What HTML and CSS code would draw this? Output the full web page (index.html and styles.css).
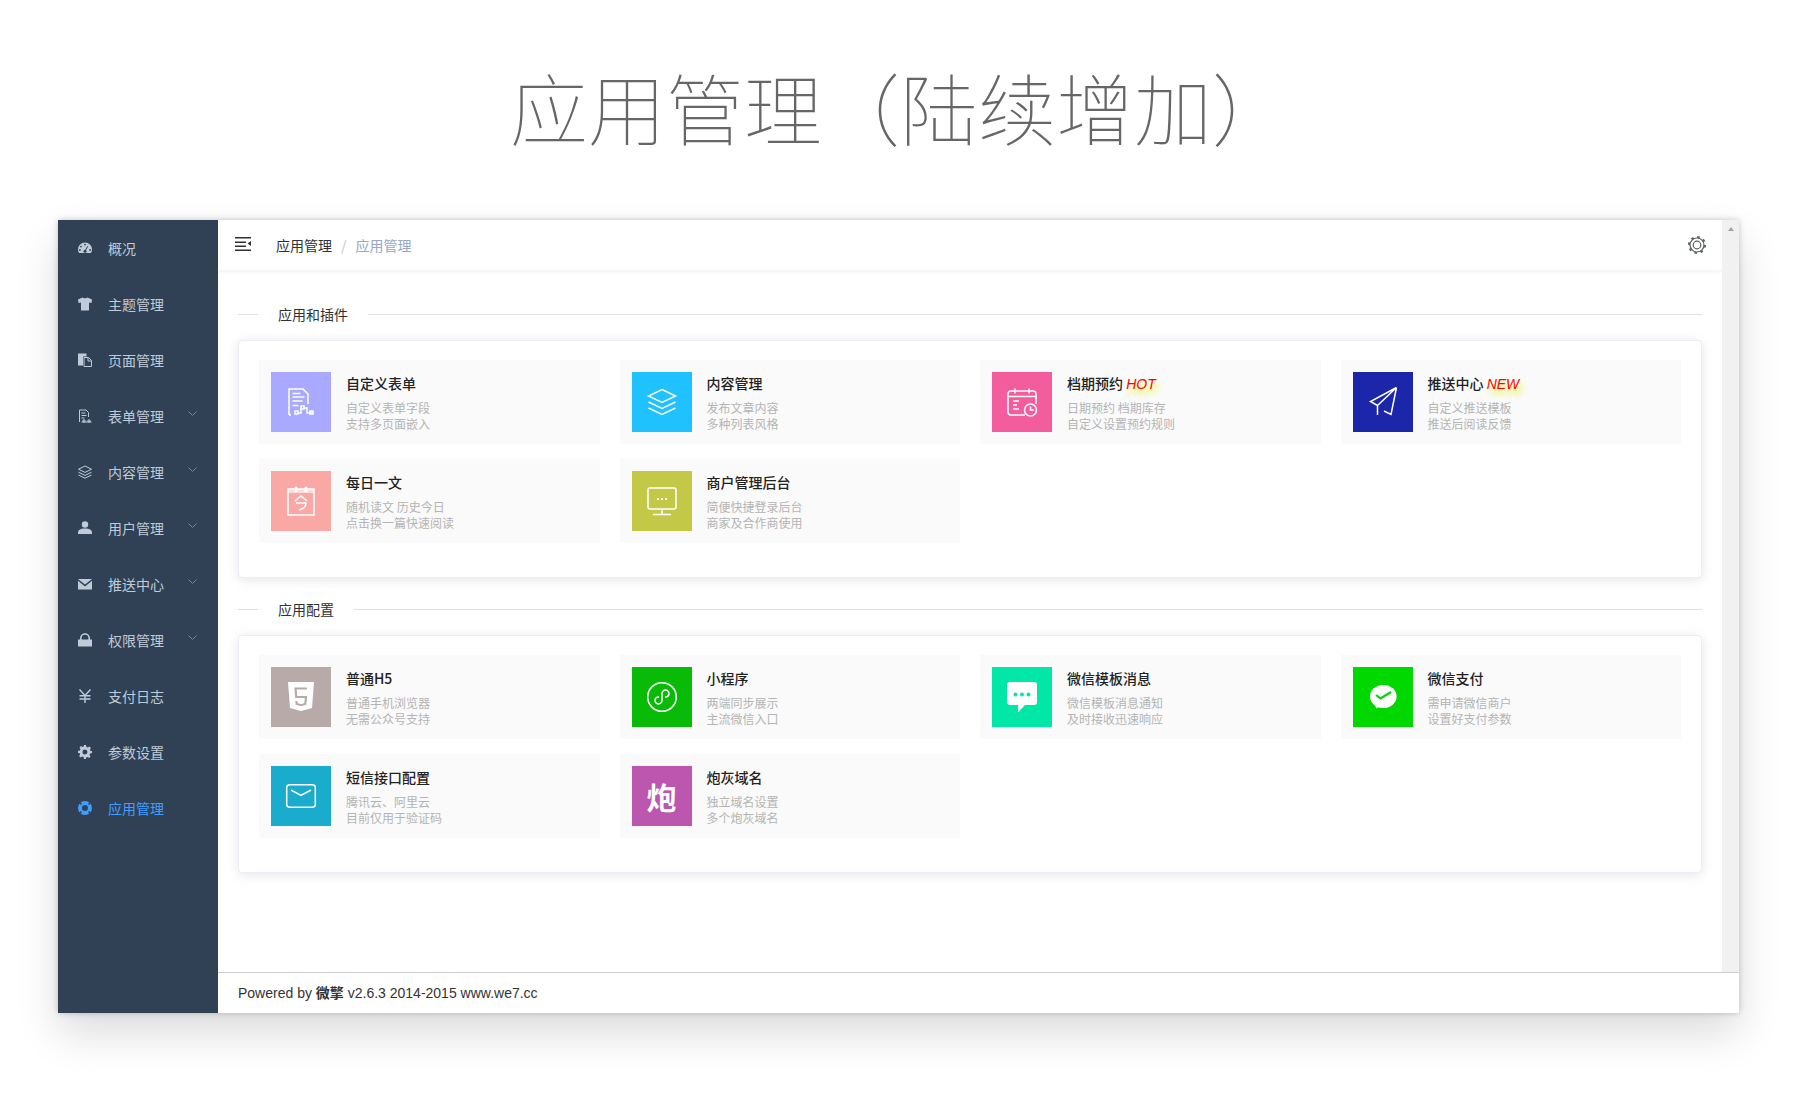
FILE: index.html
```html
<!DOCTYPE html>
<html lang="zh-CN">
<head>
<meta charset="utf-8">
<title>应用管理</title>
<link rel="stylesheet" href="styles.css">
</head>
<body>
<header class="hero"><h1 class="hero-title">应用管理（陆续增加）</h1></header>
<div class="window">
  <nav class="sidebar">
    <a class="nav-item"><svg class="nav-icon" viewBox="0 0 14 14"><path class="nf" d="M7 1.5A7 7 0 0 0 0 8.5c0 1.4.4 2.6 1.1 3.5h11.8c.7-.9 1.1-2.1 1.1-3.5a7 7 0 0 0-7-7Z"/><circle class="nk" cx="7" cy="3.6" r=".9"/><circle class="nk" cx="3" cy="5.6" r=".9"/><circle class="nk" cx="1.9" cy="9" r=".9"/><circle class="nk" cx="12.1" cy="9" r=".9"/><circle class="nk" cx="7" cy="10.3" r="1.5"/><path class="nks" d="M7 10 9.8 5.2"/></svg><span>概况</span></a>
    <a class="nav-item"><svg class="nav-icon" viewBox="0 0 14 14"><path class="nf" d="M4.5.5c1 1 4 1 5 0L14 2.5 13.5 6 11 5.4v8.1H3V5.4L.5 6 0 2.5Z"/></svg><span>主题管理</span></a>
    <a class="nav-item"><svg class="nav-icon" viewBox="0 0 14 14"><path class="nf" d="M0 .5h8.5v3H5v9H0Z"/><path class="ns" d="M6 4.5h4.5L13.5 7.5v6H6ZM10 4.5V8h3.5"/></svg><span>页面管理</span></a>
    <a class="nav-item"><svg class="nav-icon" viewBox="0 0 14 14"><path class="ns" d="M1.5 13V1h6.5l2.5 2.5V8M3.5 4h4M3.5 6.5h5M3.5 9h3M3.5 13h10M5 11h2v2H5ZM10 11h2v2h-2Z"/></svg><span>表单管理</span><svg class="chev" viewBox="0 0 9 5"><path d="M.5.5 4.5 4.5 8.500.5"/></svg></a>
    <a class="nav-item"><svg class="nav-icon" viewBox="0 0 14 14"><path class="ns" d="M7 1 13.500 4.200 7 7.400.5 4.200ZM.5 7.200 7 10.400l6.500-3.200M.5 10 7 13.200 13.500 10"/></svg><span>内容管理</span><svg class="chev" viewBox="0 0 9 5"><path d="M.5.5 4.500 4.500 8.500.5"/></svg></a>
    <a class="nav-item"><svg class="nav-icon" viewBox="0 0 14 14"><circle class="nf" cx="7" cy="3.500" r="3.200"/><path class="nf" d="M0 13v-1.500C0 9 3 7.600 7 7.600s7 1.400 7 3.900V13Z"/></svg><span>用户管理</span><svg class="chev" viewBox="0 0 9 5"><path d="M.5.5 4.500 4.500 8.500.5"/></svg></a>
    <a class="nav-item"><svg class="nav-icon" viewBox="0 0 14 14"><path class="nf" d="M0 2h14L7 7.600ZM0 3.800V12.500h14V3.800L7 9.400Z"/></svg><span>推送中心</span><svg class="chev" viewBox="0 0 9 5"><path d="M.5.5 4.500 4.500 8.500.5"/></svg></a>
    <a class="nav-item"><svg class="nav-icon" viewBox="0 0 14 14"><path class="nf" d="M0 6.500h14V13.500H0Z"/><path class="ns ns-lock" d="M2.800 7V5.200a4.200 4.200 0 0 1 8.400 0V7"/></svg><span>权限管理</span><svg class="chev" viewBox="0 0 9 5"><path d="M.5.5 4.500 4.500 8.500.5"/></svg></a>
    <a class="nav-item"><svg class="nav-icon" viewBox="0 0 14 14"><path class="ns ns-yen" d="M1.500.5 7 6.500 12.500.5M7 6.500V14M1.500 6.700h11M1.500 10h11"/></svg><span>支付日志</span></a>
    <a class="nav-item"><svg class="nav-icon" viewBox="0 0 14 14"><path class="nf nf-gear" d="M6 0h2l.4 1.900 1.500.6L11.500 1.500 12.900 2.900l-1 1.600.6 1.500 1.500.000v2l-1.900.4-.6 1.500 1 1.600-1.400 1.400-1.600-1-1.500.6L8 14H6l-.4-1.900-1.500-.6-1.600 1L1.100 11.100l1-1.600-.6-1.500L0 8V6l1.900-.4.600-1.500-1-1.600L2.900 1.100l1.600 1 1.100-.6ZM7 4.500a2.500 2.500 0 1 0 0 5 2.500 2.500 0 0 0 0-5Z"/></svg><span>参数设置</span></a>
    <a class="nav-item nav-item-active"><svg class="nav-icon" viewBox="0 0 14 14"><circle class="ring" cx="7" cy="7" r="5"/><path class="ring-gap" d="M3.500 3.500 1.800 1.800M10.500 3.500l1.700-1.700M3.500 10.500l-1.700 1.700M10.500 10.500l1.700 1.700"/></svg><span>应用管理</span></a>
  </nav>
  <div class="main">
    <div class="upper">
      <div class="page">
        <div class="topbar">
          <svg class="burger" viewBox="0 0 16 14"><path d="M0 0h16v1.500H0ZM0 4.500h11V6H0ZM0 8.500h11V10H0ZM0 12.500h16V14H0ZM16 4v5l-3.500-2.500Z"/></svg>
          <div class="crumbs"><span class="crumb">应用管理</span><span class="crumb-sep">/</span><span class="crumb-last">应用管理</span></div>
          <svg class="settings" viewBox="0 0 18 18"><circle class="g1" cx="9" cy="9" r="7"/><circle class="g2" cx="9" cy="9" r="8"/><circle class="g1" cx="9" cy="9" r="3.800"/></svg>
        </div>
        <div class="content">
          <div class="section-title"><span class="rule rule-short"></span><span class="section-name">应用和插件</span><span class="rule"></span></div>
          <section class="panel">
            <div class="grid">
              <div class="card"><div class="tile tile-form"><svg viewBox="0 0 60 60"><path class="l" d="M18 43V17h14l5 5v10M21.500 21.500h8M21.500 25h12M21.500 29h10M21.500 33.500h6M18 43h2M26 41h4v-5M33 36h3v5h6"/><rect class="l" x="24" y="39" width="3" height="3"/><rect class="l" x="30" y="34" width="3" height="3"/><rect class="l" x="39" y="39" width="3" height="3"/></svg></div><div class="info"><div class="name">自定义表单</div><div class="desc">自定义表单字段<br>支持多页面嵌入</div></div></div>
              <div class="card"><div class="tile tile-content"><svg viewBox="0 0 60 60"><path class="l" d="M30 17.500 43.500 24 30 30.500 16.500 24ZM16.500 30 30 36.500 43.500 30M16.500 36 30 42.500 43.500 36"/></svg></div><div class="info"><div class="name">内容管理</div><div class="desc">发布文章内容<br>多种列表风格</div></div></div>
              <div class="card"><div class="tile tile-booking"><svg viewBox="0 0 60 60"><path class="l" d="M33 43H19a3 3 0 0 1-3-3V22a3 3 0 0 1 3-3h22a3 3 0 0 1 3 3v10M16 24.500h28M23 16.500v5M37 16.500v5M21 29h6M21 33h4M21 37h6"/><circle class="l" cx="38.500" cy="38" r="6"/><path class="l" d="M38.500 34.500V38h3.500"/></svg></div><div class="info"><div class="name">档期预约 <em class="tag">HOT</em></div><div class="desc">日期预约 档期库存<br>自定义设置预约规则</div></div></div>
              <div class="card"><div class="tile tile-push"><svg viewBox="0 0 60 60"><path class="l" d="M43.500 15.500 17.500 29.500 24.500 33.500V43M43.500 15.500 24.500 33.500M43.500 15.500 38 42.500 31 39"/></svg></div><div class="info"><div class="name">推送中心 <em class="tag">NEW</em></div><div class="desc">自定义推送模板<br>推送后阅读反馈</div></div></div>
              <div class="card"><div class="tile tile-daily"><svg viewBox="0 0 60 60"><rect class="l" x="17" y="18" width="26" height="26"/><rect class="w wf" x="17" y="18" width="26" height="4"/><rect class="w" x="23.500" y="15.500" width="3" height="6" rx="1.500"/><rect class="w" x="33.500" y="15.500" width="3" height="6" rx="1.500"/><path class="l" d="M24 30l6-5 6 5M25 32h10c0 3.500-3 6-7 7"/></svg></div><div class="info"><div class="name">每日一文</div><div class="desc">随机读文 历史今日<br>点击换一篇快速阅读</div></div></div>
              <div class="card"><div class="tile tile-merchant"><svg viewBox="0 0 60 60"><rect class="l" x="16" y="17" width="28" height="21" rx="2"/><path class="l" d="M30 38v5.500M21 43.500h18"/><rect class="w" x="25" y="27" width="2" height="2"/><rect class="w" x="29" y="27" width="2" height="2"/><rect class="w" x="33" y="27" width="2" height="2"/></svg></div><div class="info"><div class="name">商户管理后台</div><div class="desc">简便快捷登录后台<br>商家及合作商使用</div></div></div>
            </div>
          </section>
          <div class="section-title section-title-next"><span class="rule rule-short"></span><span class="section-name">应用配置</span><span class="rule"></span></div>
          <section class="panel">
            <div class="grid">
              <div class="card"><div class="tile tile-h5"><svg viewBox="0 0 60 60"><path class="w" d="M17 15h26l-2 26-11 3-11-3Z"/><path class="k" d="M36 21.500H24.500l.7 8.500H35l-.7 7-4.300 1.200-4.300-1.200-.3-3"/></svg></div><div class="info"><div class="name">普通H5</div><div class="desc">普通手机浏览器<br>无需公众号支持</div></div></div>
              <div class="card"><div class="tile tile-mini"><svg viewBox="0 0 60 60"><circle class="l" cx="30" cy="30" r="14.300"/><path class="l" d="M27 30a3.500 3.500 0 1 0 3 3.500v-7a3.500 3.500 0 1 1 3 3.500"/></svg></div><div class="info"><div class="name">小程序</div><div class="desc">两端同步展示<br>主流微信入口</div></div></div>
              <div class="card"><div class="tile tile-tpl"><svg viewBox="0 0 60 60"><path class="w" d="M18 15h24a3 3 0 0 1 3 3v17a3 3 0 0 1-3 3h-9l-7 7.500V38h-8a3 3 0 0 1-3-3V18a3 3 0 0 1 3-3Z"/><circle class="kf" cx="23.500" cy="27.500" r="2"/><circle class="kf" cx="30" cy="27.500" r="2"/><circle class="kf" cx="36.500" cy="27.500" r="2"/></svg></div><div class="info"><div class="name">微信模板消息</div><div class="desc">微信模板消息通知<br>及时接收迅速响应</div></div></div>
              <div class="card"><div class="tile tile-pay"><svg viewBox="0 0 60 60"><ellipse class="w" cx="30.300" cy="29.500" rx="13.300" ry="11.500"/><path class="w" d="M22 36l1 5.500 6-3.500Z"/><path class="k" d="M23 28l4.500 3.500L38 25"/></svg></div><div class="info"><div class="name">微信支付</div><div class="desc">需申请微信商户<br>设置好支付参数</div></div></div>
              <div class="card"><div class="tile tile-sms"><svg viewBox="0 0 60 60"><rect class="l" x="15.700" y="18.700" width="28.600" height="22.600" rx="3"/><path class="l" d="M20 24l10 5.500L40 24"/></svg></div><div class="info"><div class="name">短信接口配置</div><div class="desc">腾讯云、阿里云<br>目前仅用于验证码</div></div></div>
              <div class="card"><div class="tile tile-cannon"><span class="tile-glyph">炮</span></div><div class="info"><div class="name">炮灰域名</div><div class="desc">独立域名设置<br>多个炮灰域名</div></div></div>
            </div>
          </section>
        </div>
      </div>
      <div class="scrolltrack"><span class="scrollarrow"></span></div>
    </div>
    <footer class="footer">Powered by <b class="brand">微擎</b> v2.6.3 2014-2015 www.we7.cc</footer>
  </div>
</div>
</body>
</html>
```
FILE: styles.css
```css
* { box-sizing: border-box; }
html, body { margin: 0; padding: 0; background: #fff; }
body {
  height: 1100px;
  overflow: hidden;
  font-family: "Noto Sans CJK SC", "Liberation Sans", sans-serif;
  font-size: 14px;
  color: #303133;
}
.hero {
  height: 220px;
  display: flex;
  align-items: center;
  justify-content: center;
  padding-bottom: 6px;
}
.hero-title {
  margin: 0;
  font-size: 78px;
  font-weight: 100;
  color: #666;
  line-height: 1.2;
}
.window {
  display: flex;
  width: 1681px;
  height: 793px;
  margin-left: 58px;
  background: #fff;
  box-shadow: 0 20px 40px rgba(0, 0, 0, .14), 0 0 6px rgba(0, 0, 0, .22);
}
.sidebar {
  flex: 0 0 160px;
  background: #304156;
}
.nav-item {
  display: flex;
  align-items: center;
  height: 56px;
  padding: 0 21px 0 20px;
  color: #bfcbd9;
  line-height: 20px;
}
.nav-item-active { color: #409eff; }
.nav-icon {
  flex: none;
  width: 14px;
  height: 14px;
  margin-right: 16px;
}
.nf { fill: currentColor; }
.nk { fill: #304156; }
.nks { stroke: #304156; stroke-width: 1; fill: none; }
.ns { fill: none; stroke: currentColor; stroke-width: 1; }
.ns-lock { stroke-width: 1.600; }
.ns-yen { stroke-width: 1.400; }
.nf-gear { fill-rule: evenodd; }
.ring { fill: none; stroke: currentColor; stroke-width: 4; }
.ring-gap { fill: none; stroke: #304156; stroke-width: 1.600; }
.chev {
  width: 9px;
  height: 5px;
  margin-left: auto;
  margin-bottom: 6px;
  fill: none;
  stroke: #77859a;
  stroke-width: 1;
}
.main {
  flex: 1;
  min-width: 0;
  display: flex;
  flex-direction: column;
}
.upper {
  flex: 1;
  min-height: 0;
  display: flex;
}
.page { flex: 1; min-width: 0; }
.topbar {
  height: 50px;
  display: flex;
  align-items: center;
  padding: 0 16px 0 17px;
  box-shadow: 0 1px 4px rgba(0, 21, 41, .08);
}
.burger {
  width: 16px;
  height: 14px;
  margin-top: -3px;
  fill: #303133;
}
.crumbs { display: flex; margin-left: 25px; line-height: 20px; margin-top: -1px; }
.crumb-sep { margin: 0 9px; color: #c0c4cc; }
.crumb-last { color: #97a8be; }
.settings {
  width: 18px;
  height: 18px;
  margin-left: auto;
  fill: none;
  stroke: #5a5e66;
}
.g1 { stroke-width: 1.200; }
.g2 { stroke-width: 2; stroke-dasharray: 2.500 3.780; }
.content { padding: 34px 20px 0; }
.section-title {
  display: flex;
  align-items: center;
  height: 20px;
  margin-bottom: 16px;
}
.section-title-next { margin-top: 21px; }
.rule { flex: 1; height: 1px; background: #dcdfe6; }
.rule-short { flex: 0 0 20px; }
.section-name { margin: 0 20px; line-height: 20px; }
.panel {
  height: 238px;
  padding: 19px 20px 0;
  background: #fff;
  border: 1px solid #ebeef5;
  border-radius: 4px;
  box-shadow: 0 2px 12px rgba(0, 0, 0, .1);
}
.grid {
  display: grid;
  grid-template-columns: repeat(4, 1fr);
  gap: 15px 20px;
}
.card {
  display: flex;
  height: 84px;
  padding: 12px;
  background: #fafafa;
}
.tile {
  flex: 0 0 60px;
  height: 60px;
  display: flex;
  align-items: center;
  justify-content: center;
}
.tile svg { display: block; width: 60px; height: 60px; }
.l { fill: none; stroke: #fff; stroke-width: 1.500; }
.w { fill: #fff; }
.wf { fill-opacity: .6; }
.k { fill: none; stroke: currentColor; stroke-width: 2.200; }
.kf { fill: currentColor; }
.tile-form { background: #a9a9ff; }
.tile-content { background: #1fc2ff; }
.tile-booking { background: #f35c9d; }
.tile-push { background: #1c26ab; }
.tile-daily { background: #faa8a5; }
.tile-merchant { background: #c3c946; }
.tile-h5 { background: #b9aaaa; color: #b9aaaa; }
.tile-mini { background: #09bb07; }
.tile-tpl { background: #00e7a7; color: #00e7a7; }
.tile-pay { background: #00d800; color: #00d800; }
.tile-sms { background: #1aaccc; }
.tile-cannon { background: #bc56ae; }
.tile-glyph {
  color: #fff;
  font-size: 30px;
  font-weight: 700;
  line-height: 1;
}
.info { margin-left: 15px; }
.name {
  margin-top: 0;
  height: 22px;
  line-height: 22px;
  font-weight: 500;
  color: #222;
}
.tag {
  font-family: "Liberation Sans", sans-serif;
  font-weight: 400;
  font-style: italic;
  color: #f00;
  text-shadow: 3px 5px 6px #e8f000;
}
.desc {
  margin-top: 6px;
  font-size: 12px;
  line-height: 16px;
  color: #b4b4b4;
}
.scrolltrack {
  flex: 0 0 17px;
  background: #f1f1f1;
  display: flex;
  justify-content: center;
}
.scrollarrow {
  width: 0;
  height: 0;
  margin-top: 7px;
  border-left: 3.500px solid transparent;
  border-right: 3.500px solid transparent;
  border-bottom: 4px solid #a3a3a3;
}
.footer {
  flex: 0 0 41px;
  padding-left: 20px;
  border-top: 1px solid #ccc;
  font-family: "Liberation Sans", "Noto Sans CJK SC", sans-serif;
  line-height: 40px;
  color: #333;
}
.brand { font-weight: 700; }
```
